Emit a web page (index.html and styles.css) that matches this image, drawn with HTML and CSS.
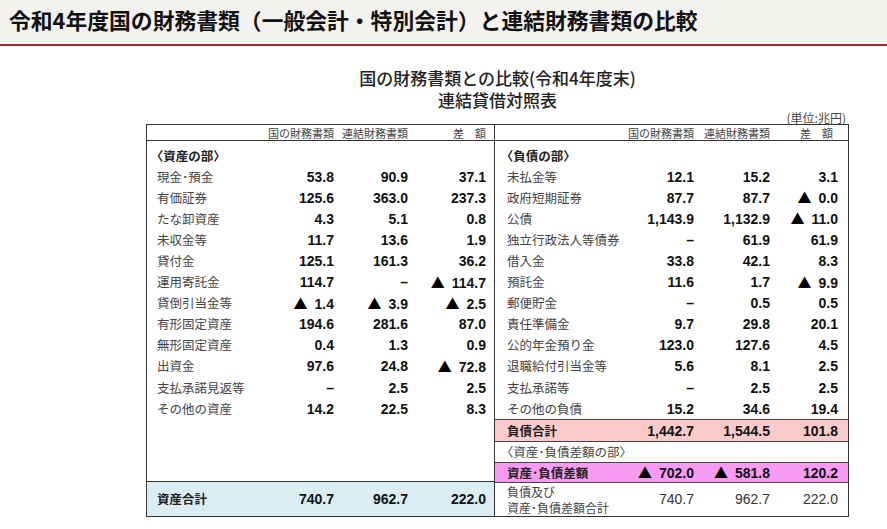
FILE: index.html
```html
<!DOCTYPE html>
<html lang="ja">
<head>
<meta charset="utf-8">
<title>令和4年度国の財務書類と連結財務書類の比較</title>
<link rel="stylesheet" href="styles.css">
</head>
<body>
<header class="page-head">
  <h1 class="page-title">令和4年度国の財務書類（一般会計・特別会計）と連結財務書類の比較</h1>
</header>
<main class="sheet">
  <h2 class="sheet-title"><span class="t-line">国の財務書類との比較(令和4年度末)</span><span class="t-line">連結貸借対照表</span></h2>
  <div class="unit">(単位:兆円)</div>
  <div class="bs">
    <section class="half half-left">
      <div class="row head"><span></span><span>国の財務書類</span><span>連結財務書類</span><span class="h3">差　額</span></div>
      <div class="rows">
        <div class="row"><span class="lbl sec"><span class="br">〈</span>資産の部<span class="br">〉</span></span><span></span><span></span><span></span></div>
        <div class="row"><span class="lbl">現金･預金</span><span class="num">53.8</span><span class="num">90.9</span><span class="num">37.1</span></div>
        <div class="row"><span class="lbl">有価証券</span><span class="num">125.6</span><span class="num">363.0</span><span class="num">237.3</span></div>
        <div class="row"><span class="lbl">たな卸資産</span><span class="num">4.3</span><span class="num">5.1</span><span class="num">0.8</span></div>
        <div class="row"><span class="lbl">未収金等</span><span class="num">11.7</span><span class="num">13.6</span><span class="num">1.9</span></div>
        <div class="row"><span class="lbl">貸付金</span><span class="num">125.1</span><span class="num">161.3</span><span class="num">36.2</span></div>
        <div class="row"><span class="lbl">運用寄託金</span><span class="num">114.7</span><span class="num">–</span><span class="num"><span class="tri">▲</span>114.7</span></div>
        <div class="row"><span class="lbl">貸倒引当金等</span><span class="num"><span class="tri">▲</span>1.4</span><span class="num"><span class="tri">▲</span>3.9</span><span class="num"><span class="tri">▲</span>2.5</span></div>
        <div class="row"><span class="lbl">有形固定資産</span><span class="num">194.6</span><span class="num">281.6</span><span class="num">87.0</span></div>
        <div class="row"><span class="lbl">無形固定資産</span><span class="num">0.4</span><span class="num">1.3</span><span class="num">0.9</span></div>
        <div class="row"><span class="lbl">出資金</span><span class="num">97.6</span><span class="num">24.8</span><span class="num"><span class="tri">▲</span>72.8</span></div>
        <div class="row"><span class="lbl">支払承諾見返等</span><span class="num">–</span><span class="num">2.5</span><span class="num">2.5</span></div>
        <div class="row"><span class="lbl">その他の資産</span><span class="num">14.2</span><span class="num">22.5</span><span class="num">8.3</span></div>
      </div>
      <div class="spacer"></div>
      <div class="row total-assets"><span class="lbl strong">資産合計</span><span class="num">740.7</span><span class="num">962.7</span><span class="num">222.0</span></div>
    </section>
    <section class="half half-right">
      <div class="row head"><span></span><span>国の財務書類</span><span>連結財務書類</span><span class="h3">差　額</span></div>
      <div class="rows">
        <div class="row"><span class="lbl sec"><span class="br">〈</span>負債の部<span class="br">〉</span></span><span></span><span></span><span></span></div>
        <div class="row"><span class="lbl">未払金等</span><span class="num">12.1</span><span class="num">15.2</span><span class="num">3.1</span></div>
        <div class="row"><span class="lbl">政府短期証券</span><span class="num">87.7</span><span class="num">87.7</span><span class="num"><span class="tri">▲</span>0.0</span></div>
        <div class="row"><span class="lbl">公債</span><span class="num">1,143.9</span><span class="num">1,132.9</span><span class="num"><span class="tri">▲</span>11.0</span></div>
        <div class="row"><span class="lbl">独立行政法人等債券</span><span class="num">–</span><span class="num">61.9</span><span class="num">61.9</span></div>
        <div class="row"><span class="lbl">借入金</span><span class="num">33.8</span><span class="num">42.1</span><span class="num">8.3</span></div>
        <div class="row"><span class="lbl">預託金</span><span class="num">11.6</span><span class="num">1.7</span><span class="num"><span class="tri">▲</span>9.9</span></div>
        <div class="row"><span class="lbl">郵便貯金</span><span class="num">–</span><span class="num">0.5</span><span class="num">0.5</span></div>
        <div class="row"><span class="lbl">責任準備金</span><span class="num">9.7</span><span class="num">29.8</span><span class="num">20.1</span></div>
        <div class="row"><span class="lbl">公的年金預り金</span><span class="num">123.0</span><span class="num">127.6</span><span class="num">4.5</span></div>
        <div class="row"><span class="lbl">退職給付引当金等</span><span class="num">5.6</span><span class="num">8.1</span><span class="num">2.5</span></div>
        <div class="row"><span class="lbl">支払承諾等</span><span class="num">–</span><span class="num">2.5</span><span class="num">2.5</span></div>
        <div class="row"><span class="lbl">その他の負債</span><span class="num">15.2</span><span class="num">34.6</span><span class="num">19.4</span></div>
      </div>
      <div class="row total-liab"><span class="lbl strong">負債合計</span><span class="num">1,442.7</span><span class="num">1,544.5</span><span class="num">101.8</span></div>
      <div class="row sub-sec"><span class="lbl span4"><span class="br">〈</span>資産･負債差額の部<span class="br">〉</span></span></div>
      <div class="row net-assets"><span class="lbl strong">資産･負債差額</span><span class="num"><span class="tri">▲</span>702.0</span><span class="num"><span class="tri">▲</span>581.8</span><span class="num">120.2</span></div>
      <div class="row grand"><span class="lbl two">負債及び<br>資産･負債差額合計</span><span class="num plain">740.7</span><span class="num plain">962.7</span><span class="num plain">222.0</span></div>
    </section>
  </div>
</main>
</body>
</html>
```

FILE: styles.css
```css
html, body {
  margin: 0;
  padding: 0;
  background: #ffffff;
}

body {
  font-family: "Noto Sans CJK JP", "Noto Sans", sans-serif;
  color: #222;
}

.page-head {
  height: 44px;
  background: #f4f2ee;
  border-bottom: 2px solid #a3282e;
  display: flex;
  align-items: center;
  padding-left: 9px;
}

.page-title {
  margin: 0;
  font-size: 21.8px;
  line-height: 28px;
  font-weight: 700;
  color: #111;
  white-space: nowrap;
  margin-top: -5px;
}

.sheet {
  width: 703px;
  margin-left: 146px;
  padding-top: 21px;
}

.sheet-title {
  margin: 0;
  text-align: center;
  font-size: 17px;
  font-weight: 500;
  color: #222;
}

.t-line {
  display: block;
  height: 22px;
  line-height: 22px;
}

.unit {
  height: 13px;
  font-size: 12px;
  line-height: 13px;
  text-align: right;
  padding-right: 3px;
  color: #444;
}

.bs {
  display: flex;
  height: 393px;
  box-sizing: border-box;
  border: 1px solid #333;
}

.half {
  display: flex;
  flex-direction: column;
  box-sizing: border-box;
}

.half-left {
  width: 348px;
  border-right: 1px solid #333;
  --cols: 111px 76px 74px 78px;
}

.half-right {
  flex: 1;
  --cols: 120px 79px 76px 68px;
}

.row {
  display: grid;
  grid-template-columns: var(--cols);
  align-items: center;
}

.head {
  height: 16px;
  box-sizing: border-box;
  border-bottom: 1px solid #333;
  align-items: end;
  font-size: 11px;
  line-height: 13px;
  color: #444;
  text-align: right;
  white-space: nowrap;
}

.half-right .head .h3 {
  padding-right: 5px;
}

.rows {
  padding-top: 4px;
}

.rows .row {
  height: 21.1px;
}

.lbl {
  font-family: "Noto Sans CJK JP", sans-serif;
  font-size: 12.5px;
  line-height: 16px;
  color: #444;
  white-space: nowrap;
}

.half-left .lbl {
  padding-left: 10px;
}

.half-right .lbl {
  padding-left: 12px;
}

.lbl.sec,
.lbl.strong {
  font-weight: 700;
  color: #222;
}

.br {
  font-feature-settings: "halt";
}

.num {
  font-family: "Liberation Sans", "Noto Sans CJK JP", sans-serif;
  font-size: 14px;
  line-height: 16px;
  font-weight: 700;
  color: #111;
  text-align: right;
  white-space: nowrap;
}

.tri {
  font-family: "Noto Sans CJK JP", sans-serif;
  font-size: 14px;
  font-weight: 400;
  color: #000;
  margin-right: 7px;
}

.num.plain {
  font-weight: 400;
  color: #333;
}

.spacer {
  flex: 1;
}

.total-assets {
  height: 35px;
  box-sizing: border-box;
  border-top: 1px solid #333;
  background: #daedf3;
}

.total-liab {
  height: 23px;
  box-sizing: border-box;
  border-top: 1px solid #444;
  border-bottom: 1px solid #444;
  background: #fbcaca;
}

.sub-sec {
  height: 20px;
}

.span4 {
  grid-column: 1 / 5;
}

.net-assets {
  height: 21px;
  box-sizing: border-box;
  border-top: 1px solid #444;
  border-bottom: 1px solid #444;
  background: #f89cf3;
}

.grand {
  flex: 1;
}

.lbl.two {
  font-size: 12px;
  line-height: 16px;
  padding-top: 1px;
}
```
